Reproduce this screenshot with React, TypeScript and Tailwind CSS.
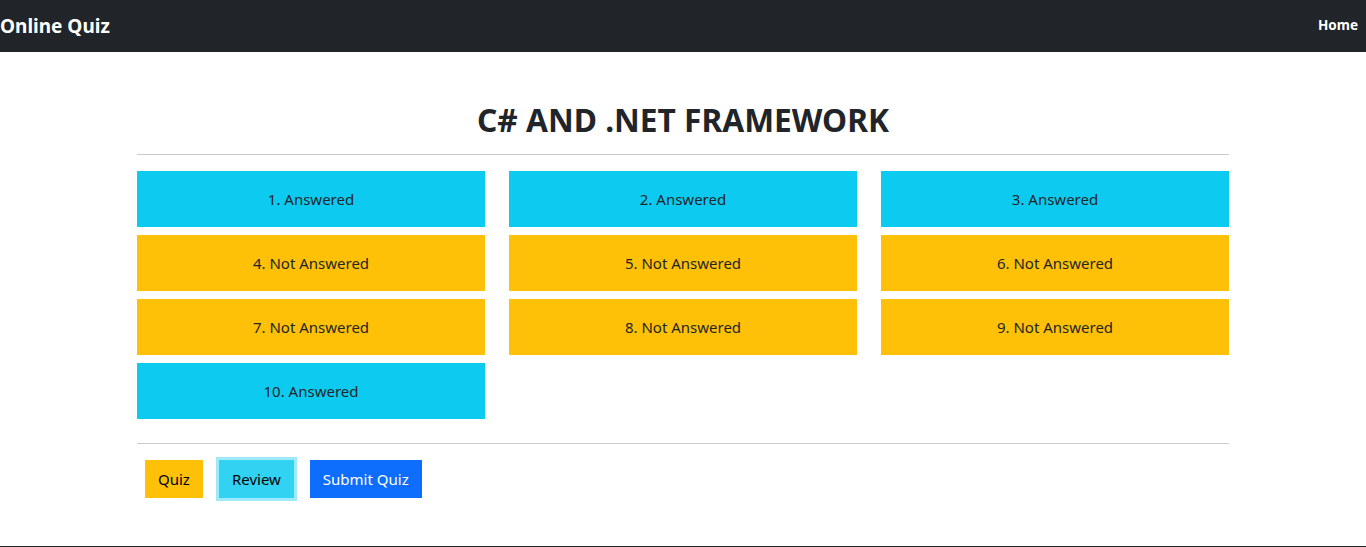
import React from "react";

const items = [
  { n: 1, a: true },
  { n: 2, a: true },
  { n: 3, a: true },
  { n: 4, a: false },
  { n: 5, a: false },
  { n: 6, a: false },
  { n: 7, a: false },
  { n: 8, a: false },
  { n: 9, a: false },
  { n: 10, a: true },
];

export default function App() {
  return (
    <div className="min-h-[547px] bg-white text-[#212529] flex flex-col" style={{ fontFamily: '"Noto Sans", "Open Sans", sans-serif' }}>
      <nav className="h-[52px] bg-[#212529] flex items-center justify-between pr-2">
        <span className="text-white font-bold text-[19px] leading-none">Online Quiz</span>
        <span className="text-white font-bold text-[13.5px] leading-none">Home</span>
      </nav>
      <main className="w-[1092px] mx-auto pt-[48px] flex-1">
        <h2 className="text-center font-bold text-[31.7px] leading-[40px]">C# AND .NET FRAMEWORK</h2>
        <hr className="mt-[14px] mb-[16px] border-0 border-t border-[#cccccc]" />
        <div className="grid grid-cols-3 gap-x-6 gap-y-2">
          {items.map((it) => (
            <div
              key={it.n}
              className={`h-14 flex items-center justify-center text-[15px] ${it.a ? "bg-[#0dcaf0]" : "bg-[#ffc107]"}`}
            >
              {it.n}. {it.a ? "Answered" : "Not Answered"}
            </div>
          ))}
        </div>
        <hr className="mt-6 mb-[16px] border-0 border-t border-[#cccccc]" />
        <div className="flex items-center gap-4 pl-2">
          <button className="h-[38px] px-[13px] bg-[#ffc107] text-[15px] text-black">Quiz</button>
          <button className="h-[38px] px-[13px] bg-[#31d2f2] text-[15px] text-black outline-[3px] outline-solid outline-[#9eeaf9]">Review</button>
          <button className="h-[38px] px-[13px] bg-[#0d6efd] text-[15px] text-white">Submit Quiz</button>
        </div>
      </main>
      <div className="border-t border-[#212529] h-[1px] mt-auto"></div>
    </div>
  );
}
